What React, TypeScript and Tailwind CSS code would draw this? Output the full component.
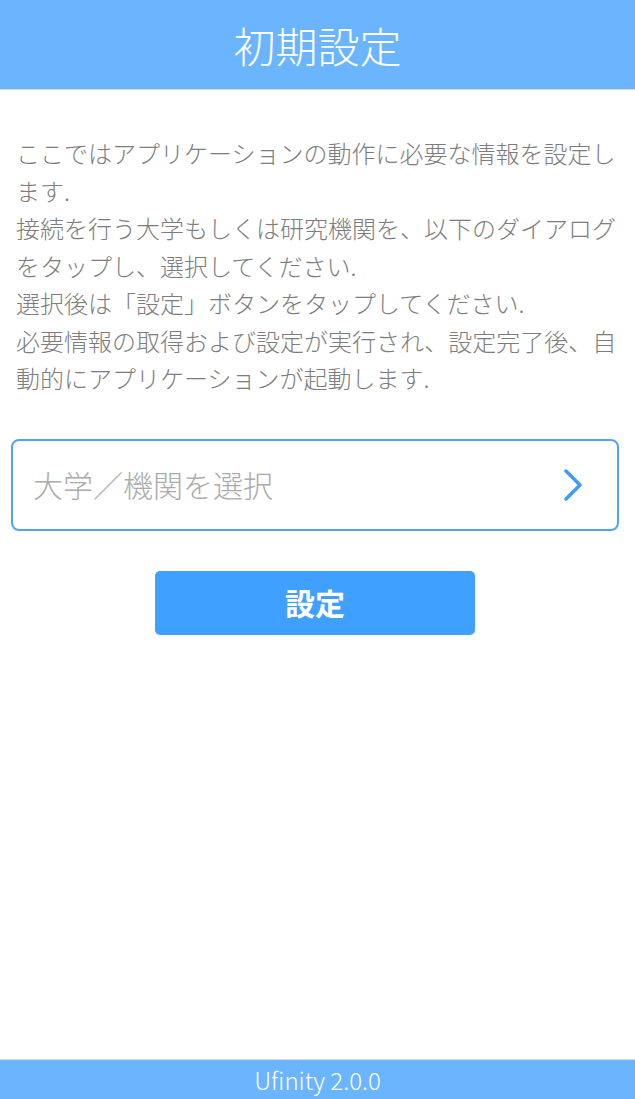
import React from 'react';

const FONT = '"Noto Sans CJK JP", "Noto Sans", sans-serif';

const lines = [
  'ここではアプリケーションの動作に必要な情報を設定します.',
  '接続を行う大学もしくは研究機関を、以下のダイアログをタップし、選択してください.',
  '選択後は「設定」ボタンをタップしてください.',
  '必要情報の取得および設定が実行され、設定完了後、自動的にアプリケーションが起動します.',
];

const App: React.FC = () => {
  return (
    <div className="flex min-h-screen flex-col bg-white" style={{ fontFamily: FONT }}>
      {/* Header */}
      <header className="flex h-[90px] items-center justify-center border-b border-[#d9d9d9] bg-[#6bb5ff]">
        <h1 className="text-[42px] font-light leading-none text-white">初期設定</h1>
      </header>

      <main className="flex flex-1 flex-col pl-[11px] pr-[16px]">
        {/* Description */}
        <div className="mt-[44px] pl-[5px] text-[24px] font-light leading-[37.5px] text-[#7d7d7d]">
          {lines.map((line, i) => (
            <p key={i}>{line}</p>
          ))}
        </div>

        {/* Institution picker */}
        <button className="mt-[42px] flex h-[92px] w-full items-center justify-between rounded-[8px] border-2 border-[#4ea5f8] bg-white pl-[20px] pr-[34px] text-left">
          <span className="text-[30px] font-light text-[#ababab]">大学／機関を選択</span>
          <svg width="20" height="32" viewBox="0 0 20 32" fill="none">
            <path d="M3 2l14 14L3 30" stroke="#3d9cf5" strokeWidth="3.5" strokeLinecap="round" strokeLinejoin="round" />
          </svg>
        </button>

        {/* Submit */}
        <div className="mt-[40px] flex justify-center">
          <button className="h-[64px] w-[320px] rounded-[5px] bg-[#40a0ff] text-[30px] font-bold text-white">
            設定
          </button>
        </div>
      </main>

      {/* Footer */}
      <footer className="flex h-[40px] items-center justify-center border-t border-[#d9d9d9] bg-[#6bb5ff]">
        <span className="text-[24px] font-light text-white">Ufinity 2.0.0</span>
      </footer>
    </div>
  );
};

export default App;
